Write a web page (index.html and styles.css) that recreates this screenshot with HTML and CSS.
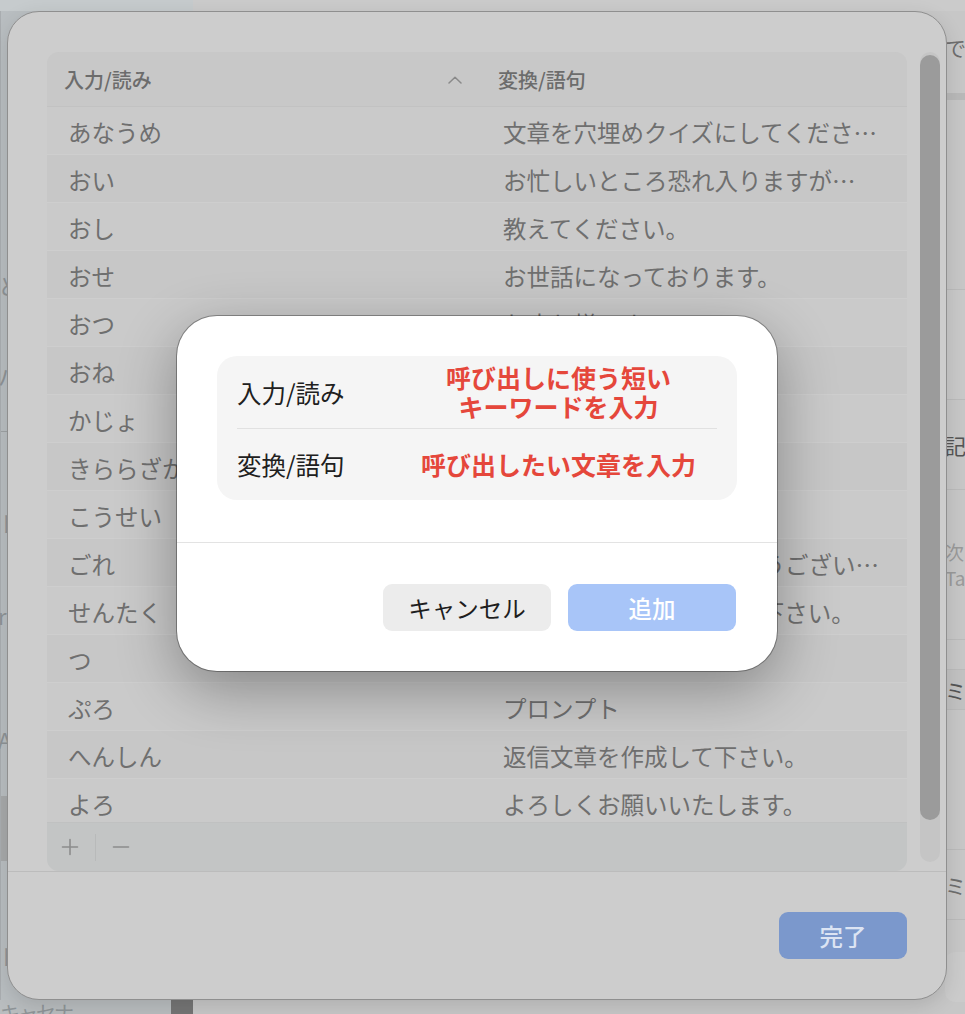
FILE: index.html
```html
<!DOCTYPE html>
<html lang="ja">
<head>
<meta charset="utf-8">
<title>ユーザ辞書</title>
<link rel="stylesheet" href="styles.css">
</head>
<body>
<div class="desk">
  <aside class="side">
    <div class="side-top"></div>
    <div class="side-body">
      <span class="side-frag f1">と</span>
      <span class="side-frag f2">パ</span>
      <span class="side-line"></span>
      <span class="side-frag f3">ト</span>
      <span class="side-frag f4">r</span>
      <span class="side-frag f5">A</span>
      <div class="side-sel"></div>
      <span class="side-frag f6">ト</span>
    </div>
    <div class="side-foot">
      <span class="side-txt">キャセナ</span>
      <span class="side-knob"></span>
    </div>
  </aside>
  <main class="main">
    <div class="main-top"></div>
    <div class="mrow r1"><span class="mtxt">での</span></div>
    <div class="mband"></div>
    <div class="mrow r2"></div>
    <div class="mrow r3"></div>
    <div class="mrow r4"><span class="mtxt dark">記</span></div>
    <div class="mrow r5"><span class="mtxt light">次<br>Ta</span></div>
    <div class="mrow r6"></div>
    <div class="mrow r7"><span class="mtxt dark">ミ</span></div>
    <div class="mrow r8"></div>
    <div class="mrow r9"><span class="mtxt">ミス</span></div>
    <div class="mrow r10"><span class="mcard"></span></div>
  </main>
</div>

<section class="sheet">
  <div class="sheet-body">
    <div class="table">
      <div class="thead">
        <div class="th th1"><span>入力/読み</span>
          <svg class="chev" width="14" height="8" viewBox="0 0 14 8"><path d="M1 7 L7 1.2 L13 7" fill="none" stroke="#8a8a8a" stroke-width="1.5" stroke-linecap="round" stroke-linejoin="round"/></svg>
        </div>
        <div class="th th2">変換/語句</div>
      </div>
      <div class="tbody">
        <div class="tr"><div class="td c1">あなうめ</div><div class="td c2">文章を穴埋めクイズにしてくださ…</div></div>
        <div class="tr"><div class="td c1">おい</div><div class="td c2">お忙しいところ恐れ入りますが…</div></div>
        <div class="tr"><div class="td c1">おし</div><div class="td c2">教えてください。</div></div>
        <div class="tr"><div class="td c1">おせ</div><div class="td c2">お世話になっております。</div></div>
        <div class="tr"><div class="td c1">おつ</div><div class="td c2">お疲れ様です。</div></div>
        <div class="tr"><div class="td c1">おね</div><div class="td c2">お願いします。</div></div>
        <div class="tr"><div class="td c1">かじょ</div><div class="td c2">箇条書きにして下さい。</div></div>
        <div class="tr"><div class="td c1">きららざか</div><div class="td c2">きららざか</div></div>
        <div class="tr"><div class="td c1">こうせい</div><div class="td c2">文章を校正して下さい。</div></div>
        <div class="tr"><div class="td c1">ごれ</div><div class="td c2">ご連絡いただきありがとうござい…</div></div>
        <div class="tr"><div class="td c1">せんたく</div><div class="td c2">選択肢付きの問題にして下さい。</div></div>
        <div class="tr"><div class="td c1">つ</div><div class="td c2">っ</div></div>
        <div class="tr"><div class="td c1">ぷろ</div><div class="td c2">プロンプト</div></div>
        <div class="tr"><div class="td c1">へんしん</div><div class="td c2">返信文章を作成して下さい。</div></div>
        <div class="tr"><div class="td c1">よろ</div><div class="td c2">よろしくお願いいたします。</div></div>
      </div>
      <div class="tfoot">
        <span class="tool">
          <svg width="18" height="18" viewBox="0 0 18 18"><path d="M9 1.5 V16.5 M1.5 9 H16.5" stroke="#8c8c8c" stroke-width="1.6" stroke-linecap="round"/></svg>
        </span>
        <span class="tool-sep"></span>
        <span class="tool">
          <svg width="18" height="18" viewBox="0 0 18 18"><path d="M1.5 9 H16.5" stroke="#8c8c8c" stroke-width="1.6" stroke-linecap="round"/></svg>
        </span>
      </div>
    </div>
    <div class="scroll"><div class="thumb"></div></div>
  </div>
  <div class="sheet-foot">
    <button class="done" type="button">完了</button>
  </div>
</section>

<div class="modal">
  <div class="modal-body">
    <div class="form">
      <div class="frow first">
        <div class="flabel">入力/読み</div>
        <div class="fvalue">呼び出しに使う短い<br>キーワードを入力</div>
      </div>
      <div class="frow">
        <div class="flabel">変換/語句</div>
        <div class="fvalue">呼び出したい文章を入力</div>
      </div>
    </div>
  </div>
  <div class="modal-foot">
    <button class="btn cancel" type="button">キャンセル</button>
    <button class="btn add" type="button">追加</button>
  </div>
</div>
</body>
</html>
```

FILE: styles.css
```css
* { box-sizing: border-box; }

html, body {
  margin: 0;
  padding: 0;
}

body {
  width: 965px;
  height: 1014px;
  overflow: hidden;
  position: relative;
  font-family: "Noto Sans CJK JP", "Noto Sans", sans-serif;
  background: #c6c6c6;
}

/* ---------- underlying window ---------- */
.desk {
  display: flex;
  width: 965px;
  height: 1014px;
}

.side {
  width: 193px;
  display: flex;
  flex-direction: column;
  background: #b9bec1;
}

.side-top {
  height: 11px;
  background: #c6cbcd;
}

.side-body {
  flex: 1;
  position: relative;
  border-left: 1px solid #a9adb0;
}

.side-frag {
  position: absolute;
  left: -3px;
  font-size: 22px;
  color: #8e9396;
}
.f1 { top: 258px; }
.f2 { top: 348px; }
.f3 { top: 495px; }
.f4 { top: 588px; }
.f5 { top: 712px; }
.f6 { top: 928px; }

.side-line {
  position: absolute;
  left: 0;
  top: 420px;
  width: 8px;
  height: 1px;
  background: #9ea2a4;
}

.side-sel {
  position: absolute;
  left: 0;
  top: 785px;
  width: 8px;
  height: 65px;
  background: #a7a9aa;
}

.side-foot {
  height: 14px;
  display: flex;
  align-items: flex-start;
  overflow: hidden;
  background: #b9bdbf;
}

.side-txt {
  font-size: 20px;
  line-height: 1;
  margin-top: 3px;
  color: #8f9598;
  width: 171px;
  letter-spacing: -2px;
}

.side-knob {
  width: 22px;
  height: 14px;
  background: #757575;
}

.main {
  flex: 1;
  display: flex;
  flex-direction: column;
  background: #c7c7c7;
}

.main-top {
  height: 11px;
  background: #cbcbcb;
}

.mrow {
  border-bottom: 1px solid #bbbbbb;
  padding-left: 752px;
  display: flex;
  align-items: center;
}

.mtxt {
  font-size: 21px;
  line-height: 26px;
  color: #6e6e6e;
  white-space: nowrap;
}
.mtxt.dark { color: #555; }
.mtxt.light { color: #9a9a9a; font-size: 19px; }

.r1 { height: 82px; align-items: flex-start; padding-top: 23px; border-bottom: none; }
.mband { height: 7px; background: #b9b9b9; }
.r2 { height: 190px; }
.r3 { height: 110px; background: #c9c9c9; }
.r4 { height: 90px; }
.r5 { height: 150px; }
.r6 { height: 30px; }
.r7 { height: 40px; background: #c2c2c2; }
.r8 { height: 140px; }
.r9 { height: 70px; }
.r10 { flex: 1; border-bottom: none; }
.mcard {
  display: block;
  width: 20px;
  height: 50px;
  margin-top: 20px;
  border-radius: 10px 0 0 10px;
  background: #cbcbcb;
}

/* ---------- sheet ---------- */
.sheet {
  position: absolute;
  left: 7px;
  top: 11px;
  width: 940px;
  height: 989px;
  border: 1px solid #8f8f8f;
  border-radius: 32px;
  background: #cdcdcd;
  display: flex;
  flex-direction: column;
  overflow: hidden;
  box-shadow: 0 6px 20px rgba(0, 0, 0, 0.12);
}

.sheet-body {
  display: flex;
  align-items: flex-start;
  padding: 40px 6px 0 39px;
}

.table {
  width: 860px;
  height: 819px;
  border-radius: 12px;
  overflow: hidden;
  background: #c9c9c9;
  display: flex;
  flex-direction: column;
}

.thead {
  height: 55px;
  flex: none;
  display: grid;
  grid-template-columns: 433px 1fr;
  align-items: center;
  border-bottom: 1px solid #c2c2c2;
  background: #c8c8c8;
}

.th {
  font-size: 20px;
  font-weight: 500;
  color: #6c6c6c;
}

.th1 {
  padding-left: 17px;
  padding-right: 18px;
  display: flex;
  align-items: center;
  justify-content: space-between;
}

.th2 { padding-left: 18px; }

.chev { display: block; margin-top: 1px; }

.tbody {
  height: 715px;
  flex: none;
  overflow: hidden;
  display: flex;
  flex-direction: column;
}

.tr {
  height: 48px;
  flex: none;
  display: grid;
  grid-template-columns: 433px 1fr;
  align-items: center;
  padding-top: 3px;
  background: #cacaca;
  border-bottom: 1px solid #cecece;
}

.tr:nth-child(even) { background: #c7c7c7; }

.td {
  font-size: 23.5px;
  color: #6f6f6f;
  white-space: nowrap;
  overflow: hidden;
  text-overflow: ellipsis;
  line-height: 30px;
}

.c1 { padding-left: 21px; }
.c2 { padding-left: 23px; padding-right: 17px; }

.tfoot {
  flex: 1;
  display: flex;
  align-items: center;
  padding-left: 14px;
  background: #c3c5c5;
  border-top: 1px solid #c0c1c1;
}

.tool {
  width: 18px;
  height: 18px;
  display: block;
}
.tool svg { display: block; }

.tool-sep {
  width: 1px;
  height: 27px;
  background: #b8baba;
  margin: 0 16px;
}

.scroll {
  width: 20px;
  height: 810px;
  margin-left: 13px;
  border-radius: 10px;
  background: #c5c5c5;
  padding-top: 3px;
}

.thumb {
  width: 20px;
  height: 765px;
  border-radius: 10px;
  background: #9b9b9b;
}

.sheet-foot {
  flex: 1;
  border-top: 1px solid #bcbcbc;
  display: flex;
  justify-content: flex-end;
  align-items: flex-start;
  padding: 40px 39px 0 0;
}

.done {
  width: 128px;
  height: 47px;
  border: none;
  border-radius: 9px;
  background: #7b98cc;
  color: #dce4f3;
  font-family: inherit;
  font-size: 23.5px;
  font-weight: 500;
  padding: 0;
}

/* ---------- modal ---------- */
.modal {
  position: absolute;
  left: 177px;
  top: 316px;
  width: 600px;
  height: 355px;
  border-radius: 40px;
  background: #ffffff;
  box-shadow: 0 0 0 1px rgba(0, 0, 0, 0.32), 0 18px 60px rgba(0, 0, 0, 0.33);
  display: flex;
  flex-direction: column;
}

.modal-body {
  padding: 40px 40px 42px 40px;
  border-bottom: 1.5px solid #e3e3e3;
}

.form {
  width: 520px;
  border-radius: 20px;
  background: #f5f5f5;
  padding: 0 20px;
}

.frow {
  display: flex;
  align-items: center;
  height: 71px;
}

.frow.first {
  height: 73px;
  border-bottom: 1px solid #e1e1e1;
}

.flabel {
  width: 143px;
  font-size: 24.5px;
  color: #202020;
  white-space: nowrap;
}

.fvalue {
  flex: 1;
  margin-right: -20px;
  text-align: center;
  font-size: 25px;
  line-height: 29px;
  font-weight: 700;
  color: #e5473b;
  white-space: nowrap;
}

.modal-foot {
  flex: 1;
  display: flex;
  justify-content: flex-end;
  align-items: flex-start;
  gap: 17px;
  padding: 41px 41px 0 0;
}

.btn {
  width: 168px;
  height: 47px;
  border: none;
  border-radius: 9px;
  font-family: inherit;
  font-size: 23.5px;
  padding: 0;
}

.cancel {
  background: #ececec;
  color: #1e1e1e;
}

.add {
  background: #a8c5f8;
  color: #ffffff;
  font-weight: 500;
}
```
